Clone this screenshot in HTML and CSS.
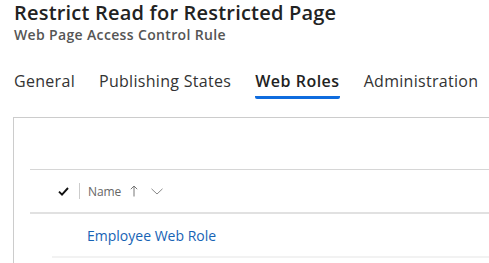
FILE: index.html
```html
<!DOCTYPE html>
<html lang="en">
<head>
    <meta charset="UTF-8">
    <title>Restrict Read for Restricted Page</title>
    <link rel="stylesheet" href="styles.css">
</head>
<body>
    <div class="record-header">
        <h1>Restrict Read for Restricted Page</h1>
        <div class="entity-name">Web Page Access Control Rule</div>
    </div>

    <div class="tabs">
        <span class="tab">General</span>
        <span class="tab">Publishing States</span>
        <span class="tab active">Web Roles</span>
        <span class="tab">Administration</span>
    </div>

    <div class="section">
        <div class="grid">
            <div class="grid-head">
                <span class="check">
                    <svg width="11" height="9" viewBox="0 0 11 9"><path d="M1 4.6 L4 7.6 L10 1" fill="none" stroke="#111" stroke-width="1.9"/></svg>
                </span>
                <span class="col-sep"></span>
                <span class="col-name">Name</span>
                <span class="sort-icon">
                    <svg width="8" height="12" viewBox="0 0 8 12"><path d="M4 11.5 V1 M0.8 4.2 L4 1 L7.2 4.2" fill="none" stroke="#777" stroke-width="1"/></svg>
                </span>
                <span class="chevron">
                    <svg width="12" height="7" viewBox="0 0 12 7"><path d="M0.5 0.8 L6 6 L11.5 0.8" fill="none" stroke="#888" stroke-width="1"/></svg>
                </span>
            </div>
            <div class="grid-row">
                <a class="row-link" href="#">Employee Web Role</a>
            </div>
        </div>
    </div>
</body>
</html>
```

FILE: styles.css
```css
* {
    margin: 0;
    padding: 0;
    box-sizing: border-box;
}

body {
    font-family: "Open Sans", "Noto Sans", sans-serif;
    background: #fff;
    color: #222;
    width: 489px;
    height: 263px;
    overflow: hidden;
}

.record-header {
    padding: 0 14px;
}

h1 {
    font-size: 20px;
    font-weight: 600;
    line-height: 26px;
    color: #222;
    letter-spacing: 0.2px;
}

.entity-name {
    font-size: 14px;
    line-height: 18px;
    font-weight: 600;
    color: #555;
    letter-spacing: 0.35px;
}

.tabs {
    display: flex;
    gap: 24px;
    padding: 26px 0 0 14px;
}

.tab {
    font-size: 16px;
    line-height: 22px;
    color: #333;
    height: 29px;
    letter-spacing: 0.3px;
    white-space: nowrap;
    flex-shrink: 0;
}

.tab.active {
    font-weight: 600;
    color: #222;
    letter-spacing: 0.5px;
    border-bottom: 3px solid #0f6cde;
    border-radius: 0 0 2px 2px;
}

.section {
    margin: 18px 0 0 13px;
    border-left: 1px solid #ccc;
    border-top: 1px solid #ccc;
    padding: 51px 0 0 16px;
    height: 146px;
}

.grid {
    border-top: 1px solid #d6d6d6;
}

.grid-head {
    display: flex;
    align-items: center;
    height: 44px;
    border-bottom: 2px solid #e1e1e1;
    padding-left: 28px;
}

.check {
    display: flex;
    width: 12px;
}

.col-sep {
    width: 1px;
    height: 16px;
    background: #ccc;
    margin: 0 8px 0 9px;
}

.col-name {
    font-size: 12px;
    color: #666;
    letter-spacing: -0.1px;
}

.sort-icon {
    display: flex;
    margin-left: 9px;
}

.chevron {
    display: flex;
    margin-left: 13px;
}

.grid-row {
    display: flex;
    align-items: center;
    height: 44px;
    margin-left: 22px;
    padding-left: 35px;
    border-bottom: 2px solid #f2f2f2;
}

.row-link {
    font-size: 14px;
    color: #1763b5;
    text-decoration: none;
}
```
